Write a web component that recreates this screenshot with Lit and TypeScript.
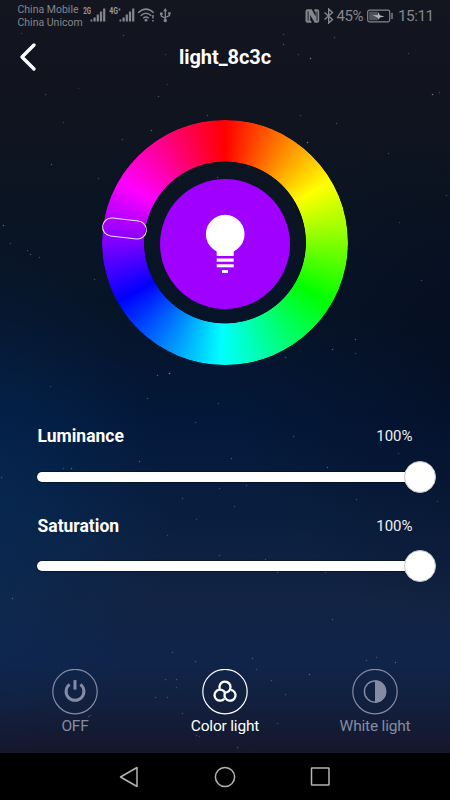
import { LitElement, html, svg, css } from "lit";
import { customElement, property } from "lit/decorators.js";

// x, y, opacity of each star in the night-sky backdrop
const STARS: [number, number, number][] = [
  [21, 33, 0.3], [123, 35, 0.4], [165, 54, 0.3], [167, 84, 0.25], [78, 88, 0.2], [283, 34, 0.35],
  [283, 44, 0.45], [298, 54, 0.3], [310, 58, 0.7], [334, 37, 0.4], [408, 53, 0.35], [45, 94, 0.35],
  [158, 96, 0.35], [207, 115, 0.4], [300, 115, 0.3], [336, 123, 0.4], [432, 94, 0.7], [439, 92, 0.35],
  [63, 122, 0.3], [151, 130, 0.55], [122, 139, 0.35], [307, 142, 0.7], [388, 153, 0.35], [51, 164, 0.45],
  [98, 178, 0.3], [217, 177, 0.4], [3, 225, 0.6], [10, 243, 0.35], [27, 250, 0.35], [30, 254, 0.45],
  [39, 257, 0.4], [94, 279, 0.35], [421, 280, 0.35], [446, 195, 0.3], [399, 222, 0.3], [332, 349, 0.55],
  [355, 339, 0.55], [355, 353, 0.35], [285, 357, 0.4], [169, 373, 0.8], [157, 375, 0.5], [50, 386, 0.3],
  [147, 398, 0.4], [218, 403, 0.35], [195, 422, 0.35], [71, 468, 0.55], [63, 468, 0.35], [139, 461, 0.5],
  [231, 458, 0.45], [293, 436, 0.4], [398, 453, 0.3], [327, 467, 0.5], [1, 477, 0.45], [182, 498, 0.4],
  [219, 488, 0.35], [246, 485, 0.4], [234, 506, 0.35], [356, 499, 0.35], [437, 501, 0.3], [196, 519, 0.3],
  [167, 535, 0.3], [219, 555, 0.35], [265, 559, 0.4], [277, 572, 0.4], [325, 572, 0.3], [12, 598, 0.45],
  [332, 619, 0.4], [195, 661, 0.4], [172, 652, 0.35], [165, 679, 0.35], [176, 679, 0.4], [176, 687, 0.3],
  [155, 697, 0.35], [167, 697, 0.35], [182, 713, 0.35], [196, 735, 0.35], [199, 736, 0.25], [237, 747, 0.4],
  [252, 658, 0.4], [256, 669, 0.35], [271, 680, 0.4], [309, 674, 0.5], [285, 694, 0.35], [376, 657, 0.35],
  [395, 662, 0.55], [366, 660, 0.35], [277, 723, 0.3], [88, 716, 0.4], [90, 715, 0.3],
];

const signal = svg`<g><rect x="0" y="11" width="1.8" height="2"/><rect x="3" y="9" width="2.2" height="4"/><rect x="6.2" y="6" width="2.2" height="7"/><rect x="9.4" y="3" width="2.2" height="10"/><rect x="12.6" y="0" width="2.2" height="13"/></g>`;

@customElement("status-bar")
class StatusBar extends LitElement {
  static styles = css`
    :host { display: flex; height: 31px; color: #85868c; fill: currentColor; justify-content: space-between; }
    .left { display: flex; padding-left: 17.5px; }
    .carriers { font-size: 10.5px; line-height: 13.5px; padding-top: 2.5px; width: 65px; white-space: nowrap; }
    .icons { display: block; }
    .net { font: 700 8.5px Roboto, sans-serif; fill: #9a9ba0; }
    .right { display: flex; align-items: center; padding-right: 16px; padding-top: 1px; height: 30px; }
    .pct { font-size: 15px; width: 27px; margin-left: 1.5px; letter-spacing: -0.4px; }
    .time { font-size: 15.5px; margin-left: 5px; width: 36px; letter-spacing: -0.6px; white-space: nowrap; }
    .battery { margin-left: 3.5px; }
  `;
  render() {
    return html`
      <div class="left">
        <div class="carriers"><div>China Mobile</div><div>China Unicom</div></div>
        <svg class="icons" width="90" height="31" viewBox="0 0 90 31">
          <text class="net" x="0.3" y="14" textLength="7.8" lengthAdjust="spacingAndGlyphs">2G</text>
          <g transform="translate(7.5 8.5)">${signal}</g>
          <text class="net" x="26.2" y="14" textLength="11.5" lengthAdjust="spacingAndGlyphs">4G⁺</text>
          <g transform="translate(36.5 8.5)">${signal}</g>
          <g fill="none" stroke="currentColor" stroke-width="1.5">
            <path d="M55.2 12.8Q63 5.500 70.700 12.800M57.700 15.800Q63 10.800 68.300 15.800M60.200 18.300Q63 15.800 65.800 18.300"/>
          </g>
          <circle cx="63" cy="20.2" r="1.4"/>
          <rect x="69.200" y="15" width="1.500" height="3.500"/><rect x="69.200" y="20" width="1.500" height="1.500"/>
          <g fill="none" stroke="currentColor" stroke-width="1.300">
            <path d="M82.300 10V20M78.300 13V16L82.300 18.300M86.400 13V15.500L82.300 17.500"/>
          </g>
          <path d="M80.300 11.300L82.300 8L84.300 11.300ZM77 12.500h2.700v2.400H77zM85.200 12.200h2.500v2.400h-2.500z"/>
          <circle cx="82.300" cy="20.500" r="1.700"/>
        </svg>
      </div>
      <div class="right">
        <svg width="30" height="16" viewBox="0 0 30 16">
          <path d="M2.500 1.200h4.200l4 7.300V4.200l-1.300-1V1.200h2.800q2 0 2 2v9.600q0 2-2 2H9.700L5.200 7v5.500l1.300 1v1.300h-4q-2 0-2-2V3.200q0-2 2-2z"/>
          <path d="M3.100 3.300v9.500M12 3.300v9.500" stroke="#13151f" stroke-width=".9"/>
          <path d="M19.500 4.500l8 7-3.800 3.500V1l3.800 3.500-8 7" fill="none" stroke="currentColor" stroke-width="1.400"/>
        </svg>
        <span class="pct">45%</span>
        <svg class="battery" width="26" height="14" viewBox="0 0 26 14">
          <rect x=".7" y="1.200" width="22" height="11.600" rx="1.800" fill="none" stroke="currentColor" stroke-width="1.200"/>
          <rect x="2.200" y="2.700" width="8.500" height="8.600" opacity=".55"/>
          <rect x="24.300" y="4" width="1.400" height="6"/>
          <path fill="#b4b5b9" d="M5.500 6L10.600 6.200l.9-3.200 1.200 3.200L17.500 7.600 12.800 8.400 11.700 10.800 10.400 8.400z"/>
        </svg>
        <span class="time">15:11</span>
      </div>`;
  }
}

@customElement("color-wheel")
class ColorWheel extends LitElement {
  static styles = css`
    :host { display: grid; width: 246px; height: 246px; place-items: center; position: relative; }
    .ring, .center { grid-area: 1 / 1; border-radius: 50%; }
    .ring {
      width: 245.5px; height: 245.5px;
      background: conic-gradient(#f00, #ff0 60deg, #0f0 120deg, #0ff 182deg, #00f 241deg, #f0f 300deg, #f00);
      -webkit-mask: radial-gradient(circle, transparent 80.6px, #000 81.3px);
      mask: radial-gradient(circle, transparent 80.6px, #000 81.3px);
    }
    .center { width: 130.500px; height: 130.500px; background: #a000ff; margin-top: 3px; display: grid; place-items: center; }
    .handle {
      position: absolute; left: 0; top: 99.500px; width: 45px; height: 19px; box-sizing: border-box;
      border: 1.500px solid #f3dcff; border-radius: 10px; transform: rotate(6.500deg);
    }
    .bulb { fill: #fff; }
  `;
  render() {
    return html`
      <div class="ring"></div>
      <div class="center">
        <svg class="bulb" width="40" height="60" viewBox="205 214 40 60">
          <path d="M216.700 256v-4.500a19.300 19.300 0 1 1 17 0v4.500z"/>
          <rect x="216.700" y="258.500" width="17" height="3.200"/>
          <rect x="216.700" y="264.300" width="17" height="3"/>
          <rect x="222" y="270" width="6" height="3"/>
        </svg>
      </div>
      <div class="handle"></div>`;
  }
}

@customElement("level-slider")
class LevelSlider extends LitElement {
  @property() label = "";
  @property({ type: Number }) value = 100;
  static styles = css`
    :host { display: block; height: 89.500px; }
    .head { display: flex; justify-content: space-between; align-items: center; height: 22px; padding: 0 37.5px 0 37.500px; }
    .label { font-size: 17.5px; font-weight: 700; }
    .value { font-size: 15px; color: #eef0f5; }
    .line { display: flex; align-items: center; height: 33px; margin: 13.1px 14px 0 37px; }
    .track { height: 10px; flex: none; background: #fff; border-radius: 5px; box-shadow: 0 0 1px 0.500px #0009; }
    .thumb { width: 32px; height: 32px; flex: none; margin-left: -15px; border-radius: 50%; background: #fff; box-sizing: border-box; border: 1px solid #c3c5cf; }
  `;
  render() {
    return html`
      <div class="head"><span class="label">${this.label}</span><span class="value">${this.value}%</span></div>
      <div class="line"><div class="track" style="width:${this.value * 3.82}px"></div><div class="thumb"></div></div>`;
  }
}

const power = svg`<path d="M17.600 15.800A8.900 8.900 0 1 0 28.400 15.800" fill="none" stroke="currentColor" stroke-width="3"/><path d="M23 11.500V21" stroke="currentColor" stroke-width="3"/>`;
// three interlocking circles, each open where the next one passes through it
const rings = svg`<g fill="none" stroke="currentColor" stroke-width="2.300" stroke-dasharray="295 65">
  <circle cx="23" cy="18.500" r="5.500" pathLength="360" transform="rotate(-200 23 18.500)"/>
  <circle cx="18" cy="26.600" r="5.500" pathLength="360" transform="rotate(40 18 26.600)"/>
  <circle cx="28" cy="26.600" r="5.500" pathLength="360" transform="rotate(-80 28 26.600)"/>
</g>`;
const contrast = svg`<circle cx="23" cy="23" r="10.600" fill="none" stroke="currentColor" stroke-width="1.400"/><path d="M23 11.700a11.300 11.300 0 0 1 0 22.600z" fill="currentColor"/>`;

@customElement("mode-button")
class ModeButton extends LitElement {
  @property() label = "";
  @property({ attribute: false }) icon: unknown;
  @property({ type: Boolean, reflect: true }) active = false;
  static styles = css`
    :host { display: flex; flex-direction: column; align-items: center; width: 150px; color: #858ba2; }
    :host([active]) { color: #fff; }
    .icon { display: block; }
    .label { font-size: 15.5px; letter-spacing: -0.2px; line-height: 20px; margin-top: 1px; white-space: nowrap; }
  `;
  render() {
    return html`
      <svg class="icon" width="46" height="46" viewBox="0 0.400 46 46">
        <circle cx="23" cy="23" r="22.200" fill="none" stroke="currentColor" stroke-width="1.200"/>${this.icon}
      </svg>
      <span class="label">${this.label}</span>`;
  }
}

@customElement("app-root")
class AppRoot extends LitElement {
  static styles = css`
    :host { display: block; width: 450px; height: 800px; overflow: hidden; font-family: Roboto, sans-serif; color: #fff; }
    .screen {
      position: relative; display: flex; flex-direction: column; height: 800px;
      background:
        radial-gradient(ellipse 200px 260px at -30px 500px, #05346677, transparent),
        radial-gradient(ellipse 230px 260px at 470px 370px, #060a1a88, transparent),
        linear-gradient(#13151f 0, #11141f 100px, #0b1422 200px, #061429 320px, #03183a 420px, #0a1f40 520px, #122343 600px, #10244a 660px, #12203f 700px, #15172b 753px);
    }
    .stars { position: absolute; inset: 0; }
    .stars circle { fill: #8fa6c8; }
    .body { position: relative; display: flex; flex-direction: column; flex: 1; }
    .header { display: grid; grid-template-columns: 60px 1fr 60px; height: 52px; align-items: center; }
    .back { margin-left: 18.5px; display: block; }
    .title { font-size: 20px; font-weight: 700; margin: 0; text-align: center; line-height: 24px; letter-spacing: -0.05px; }
    .wheel { display: flex; justify-content: center; margin-top: 36.5px; }
    .sliders { margin-top: 59.8px; }
    .modes { display: flex; margin-top: 64.7px; }
    .nav { position: relative; height: 47px; flex: none; background: #000; display: flex; justify-content: center; align-items: center; gap: 72px; }
    .nav svg { fill: none; stroke: #b4b4b4; stroke-width: 1.500; }
  `;
  render() {
    return html`
      <div class="screen">
        <svg class="stars" width="450" height="753">
          ${STARS.map(([x, y, o]) => svg`<circle cx=${x + 0.5} cy=${y + 0.5} r="0.75" opacity=${o}></circle>`)}
        </svg>
        <div class="body">
          <status-bar></status-bar>
          <div class="header">
            <svg class="back" width="20" height="30" viewBox="0 0 20 30"><path d="M15 3L3 15 15 27" fill="none" stroke="#fff" stroke-width="3.400" stroke-linecap="round" stroke-linejoin="round"/></svg>
            <h1 class="title">light_8c3c</h1>
          </div>
          <div class="wheel"><color-wheel></color-wheel></div>
          <div class="sliders">
            <level-slider label="Luminance" .value=${100}></level-slider>
            <level-slider label="Saturation" .value=${100}></level-slider>
          </div>
          <div class="modes">
            <mode-button label="OFF" .icon=${power}></mode-button>
            <mode-button label="Color light" .icon=${rings} active></mode-button>
            <mode-button label="White light" .icon=${contrast}></mode-button>
          </div>
        </div>
        <div class="nav">
          <svg width="24" height="24"><path d="M20 2.500V21.500L3.500 12z" stroke-linejoin="round"/></svg>
          <svg width="24" height="24"><circle cx="12" cy="12" r="9.600"/></svg>
          <svg width="24" height="24"><rect x="2.500" y="3" width="17.500" height="17" rx=".5"/></svg>
        </div>
      </div>`;
  }
}
